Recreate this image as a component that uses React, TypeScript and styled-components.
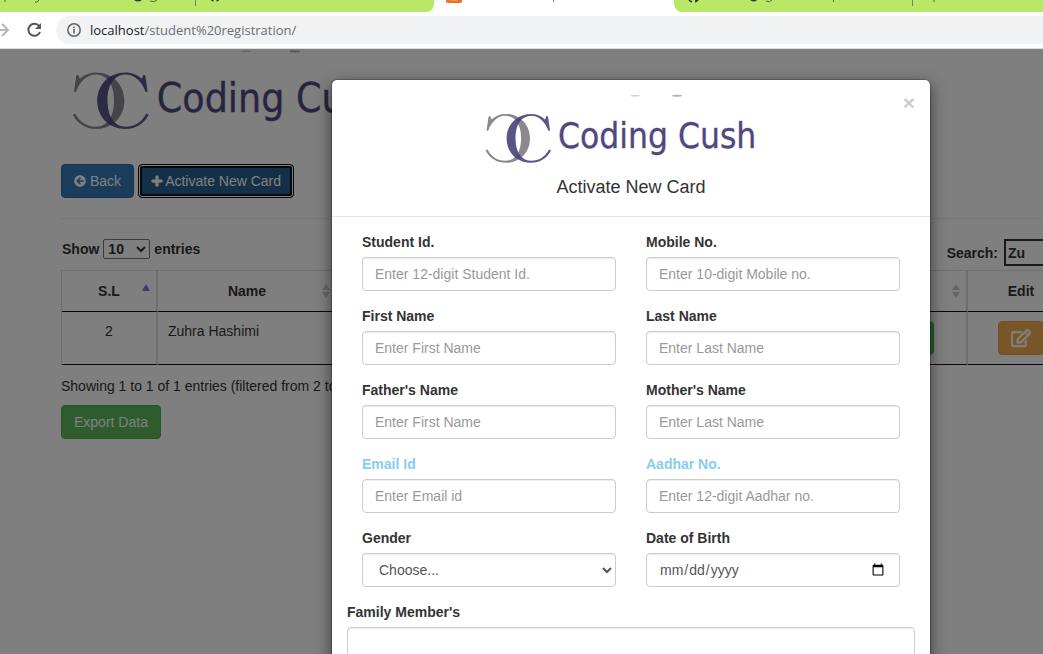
import React from 'react';
import styled, { createGlobalStyle, css } from 'styled-components';
import { FaArrowCircleLeft, FaPlus, FaRegEdit, FaGithub } from 'react-icons/fa';

const GlobalStyle = createGlobalStyle`
  *, *::before, *::after { box-sizing: border-box; }
  body {
    margin: 0;
    background: #fff;
    color: #333;
    font: 14px/20px "Liberation Sans", Arial, sans-serif;
  }
  button, input, select, textarea { font-family: inherit; }
`;

/* ---------- browser window ---------- */

const Shell = styled.div`
  display: flex;
  flex-direction: column;
  height: 100vh;
  overflow: hidden;
`;

const TabStrip = styled.div`
  display: flex;
  height: 12px;
  flex: none;
  overflow: hidden;
`;

const TabGroup = styled.div<{ $width?: number; $active?: boolean; $round?: 'left' | 'right' }>`
  flex: ${p => (p.$width ? `0 0 ${p.$width}px` : '1 1 0')};
  min-width: 0;
  overflow: hidden;
  background: ${p => (p.$active ? '#fff' : '#b8e868')};
  ${p => p.$round === 'right' && css`border-bottom-right-radius: 8px;`}
  ${p => p.$round === 'left' && css`border-bottom-left-radius: 8px;`}
  svg { display: block; }
`;

const AddressBar = styled.div`
  display: flex;
  align-items: center;
  flex: none;
  height: 37px;
  border-bottom: 1px solid #dcdddf;
  background: #fff;
`;

const NavButton = styled.button<{ $width: number }>`
  display: block;
  width: ${p => p.$width}px;
  height: 28px;
  padding: 0;
  border: 0;
  background: none;
  text-align: left;
  svg { display: block; }
`;

const Omnibox = styled.div`
  display: flex;
  align-items: center;
  gap: 8px;
  flex: 1;
  height: 28px;
  padding-left: 10px;
  border-radius: 14px 0 0 14px;
  background: #f0f2f4;
`;

const Url = styled.span`
  font: 13px/20px "Open Sans", "Noto Sans", sans-serif;
  color: #6a6e73;
  white-space: nowrap;
  b { font-weight: 400; color: #202124; }
`;

const Viewport = styled.main`
  position: relative;
  flex: 1;
  min-height: 0;
  overflow: hidden;
`;

/* ---------- page ---------- */

const Page = styled.div`
  min-width: 1262px;
`;

const Container = styled.div`
  max-width: 1170px;
  margin: 0 auto;
  padding: 0 15px;
`;

const PageLogo = styled.div`
  height: 84px;
  margin-bottom: 31px;
  padding-left: 10px;
  svg { display: block; }
`;

const Toolbar = styled.div`
  display: flex;
  gap: 4px;
`;

const tones = {
  primary: ['#337ab7', '#2e6da4'],
  success: ['#5cb85c', '#4cae4c'],
  warning: ['#f0ad4e', '#eea236'],
};

const Button = styled.button<{ $tone: keyof typeof tones; $focused?: boolean }>`
  display: inline-flex;
  align-items: center;
  gap: 4px;
  height: 34px;
  padding: 0 12px;
  border: 1px solid ${p => tones[p.$tone][1]};
  border-radius: 4px;
  background: ${p => tones[p.$tone][0]};
  color: #fff;
  font-size: 14px;
  line-height: 20px;
  white-space: nowrap;
  ${p => p.$focused && css`
    gap: 2px;
    border-color: #101010;
    background: #286090;
    box-shadow: inset 0 0 0 1px #fff, inset 0 0 0 3px #101010;
  `}
`;

const Rule = styled.hr`
  height: 1px;
  margin: 20px 0;
  border: 0;
  background: #eee;
`;

const Controls = styled.div`
  display: flex;
  justify-content: space-between;
  align-items: flex-start;
  height: 31px;
`;

const ControlLabel = styled.label`
  display: flex;
  align-items: center;
  gap: 4px;
  padding-left: 1px;
  font-weight: 700;
`;

const LengthSelect = styled.select`
  width: 47px;
  height: 20px;
  padding: 0;
  border: 1px solid #767676;
  border-radius: 2px;
  background: #fff;
  color: #333;
  font-size: 14px;
  font-weight: 700;
`;

const SearchInput = styled.input`
  width: 197px;
  height: 27px;
  margin-left: 2px;
  padding: 0 2px;
  border: 2px solid #333;
  background: #fff;
  color: #333;
  font-size: 14px;
  font-weight: 700;
`;

const Table = styled.table`
  width: 100%;
  table-layout: fixed;
  border-collapse: separate;
  border-spacing: 0;
  border-top: 1px solid #ddd;
  border-left: 1px solid #ddd;
`;

const Th = styled.th<{ $width?: number }>`
  width: ${p => (p.$width ? `${p.$width}px` : 'auto')};
  height: 41px;
  padding: 0 11px 0 10px;
  border-right: 2px solid #ddd;
  border-bottom: 1px solid #111;
  font-weight: 700;
  text-align: center;
`;

const HeadCell = styled.span`
  display: grid;
  grid-template-columns: 4px 1fr 8px;
  align-items: center;
  margin-right: -5px;
`;

const HeadText = styled.span`
  grid-column: 2;
`;

const Td = styled.td<{ $center?: boolean }>`
  height: 53px;
  padding: 9px 10px;
  border-right: 2px solid #ddd;
  border-bottom: 1px solid #111;
  text-align: ${p => (p.$center ? 'center' : 'left')};
  vertical-align: top;
`;

const Footer = styled.div`
  display: flex;
  justify-content: space-between;
  margin: 11px 0 9px;
`;

const Pager = styled.nav`
  display: flex;
  gap: 24px;
  padding-right: 20px;
  a { color: #666; text-decoration: none; }
`;

/* ---------- dialog ---------- */

const Backdrop = styled.div`
  position: absolute;
  top: 0;
  left: 0;
  width: 100%;
  min-width: 1262px;
  min-height: 100%;
  padding: 30px 0;
  background: rgba(0, 0, 0, 0.5);
`;

const Dialog = styled.section`
  width: 600px;
  margin: 0 auto;
  border: 1px solid rgba(0, 0, 0, 0.2);
  border-radius: 6px;
  background: #fff;
  background-clip: padding-box;
  box-shadow: 0 5px 15px rgba(0, 0, 0, 0.5);
`;

const DialogHeader = styled.header`
  position: relative;
  padding: 14px 15px 19px;
  border-bottom: 1px solid #e5e5e5;
  text-align: center;
  svg { display: block; margin: 0 auto; }
`;

const DialogTitle = styled.h4`
  margin: 11px 0 0;
  font-size: 18px;
  font-weight: 400;
  line-height: 20px;
`;

const CloseButton = styled.button`
  position: absolute;
  top: 12px;
  right: 15px;
  padding: 0;
  border: 0;
  background: none;
  color: #000;
  font-size: 21px;
  font-weight: 700;
  line-height: 21px;
  opacity: 0.2;
`;

const DialogBody = styled.form`
  padding: 15px;
`;

const Fields = styled.div`
  display: grid;
  grid-template-columns: 1fr 1fr;
  column-gap: 30px;
  padding: 0 15px;
`;

const Field = styled.div`
  margin-bottom: 15px;
`;

const Label = styled.label<{ $sky?: boolean }>`
  display: block;
  margin-bottom: 5px;
  font-weight: 700;
  color: ${p => (p.$sky ? '#87ceeb' : '#333')};
`;

const control = css`
  display: block;
  width: 100%;
  height: 34px;
  padding: 6px 12px;
  border: 1px solid #ccc;
  border-radius: 4px;
  background: #fff;
  box-shadow: inset 0 1px 1px rgba(0, 0, 0, 0.075);
  color: #555;
  font-size: 14px;
  line-height: 20px;
  &::placeholder { color: #999; opacity: 1; }
`;

const Input = styled.input`${control}`;
const Select = styled.select`${control}`;
const TextArea = styled.textarea`
  ${control}
  height: 74px;
  resize: none;
`;

/* ---------- drawings ---------- */

const MONOGRAM =
  'M67 56.5C62.5 65 55 68.800 47 68.800C33 68.800 22.600 58.500 22.600 44.500C22.600 30.500 33 20 47 20C52.500 20 57.500 22 61 25.500L62.500 22L64 22.500L66 36.500L64.500 37C61 27.500 54.500 21.800 47.500 21.800C37 21.800 31.500 31 31.500 44C31.500 58 37 66.800 47.500 66.800C55 66.800 61 63 65 55.500Z';

function Logo({ width, height }: { width: number; height: number }) {
  return (
    <svg width={width} height={height} viewBox="0 0 294 72" role="img" aria-label="Coding Cush">
      <path d={MONOGRAM} fill="#8b8890" transform="translate(68.600 0) scale(-1 1)" />
      <path d={MONOGRAM} fill="#48427c" fillOpacity="0.9" />
      <ellipse cx="151" cy="1.800" rx="5" ry="0.800" fill="#cfcfd3" />
      <ellipse cx="193" cy="1.800" rx="5" ry="1" fill="#b4b4b8" />
      <text
        x="74"
        y="54"
        fontSize="35"
        fontFamily="'DejaVu Sans Condensed', 'DejaVu Sans', sans-serif"
        fill="#4f4880"
        stroke="#4f4880"
        strokeOpacity="0.4"
        strokeWidth="0.8"
      >
        Coding Cush
      </text>
    </svg>
  );
}

function SortIcon({ sorted }: { sorted?: boolean }) {
  return sorted ? (
    <svg width="8" height="14" viewBox="0 0 8 14"><path d="M4 0L8 7H0Z" fill="#7b75d6" /></svg>
  ) : (
    <svg width="8" height="14" viewBox="0 0 8 14"><path d="M4 0L8 6H0ZM0 8H8L4 14Z" fill="#ccc" /></svg>
  );
}

function LeftTabs() {
  return (
    <svg width="434" height="12">
      <path d="M5 0V2M39 0L37 2H35M150 1Q154 3 157 0" stroke="#55703a" fill="none" />
      <path d="M134 0Q138 3 142 0Z" fill="#2f4318" />
      <path d="M195.500 0V6" stroke="#71894a" />
      <FaGithub x="209" y="-10" size="12" color="#25301a" />
    </svg>
  );
}

function ActiveTab() {
  return (
    <svg width="240" height="12">
      <rect x="12" y="-12" width="16" height="15" rx="2" fill="#e8702a" />
      <path d="M16 0H24" stroke="#f9b27c" />
      <path d="M119.500 0V2" stroke="#777" />
    </svg>
  );
}

function RightTabs() {
  return (
    <svg width="369" height="12">
      <FaGithub x="13" y="-10" size="13" color="#25301a" />
      <path d="M76 0Q80 3 83 0Z" fill="#2f4318" />
      <path d="M92 1Q96 3 98 0M159.500 0V2M261 1H259" stroke="#55703a" fill="none" />
      <path d="M238.500 0V6" stroke="#71894a" />
    </svg>
  );
}

/* ---------- content ---------- */

const textFields = [
  { id: 'student', label: 'Student Id.', hint: 'Enter 12-digit Student Id.' },
  { id: 'mobile', label: 'Mobile No.', hint: 'Enter 10-digit Mobile no.' },
  { id: 'first', label: 'First Name', hint: 'Enter First Name' },
  { id: 'last', label: 'Last Name', hint: 'Enter Last Name' },
  { id: 'father', label: "Father's Name", hint: 'Enter First Name' },
  { id: 'mother', label: "Mother's Name", hint: 'Enter Last Name' },
  { id: 'email', label: 'Email Id', hint: 'Enter Email id', sky: true },
  { id: 'aadhar', label: 'Aadhar No.', hint: 'Enter 12-digit Aadhar no.', sky: true },
];

const columns = [
  { label: 'S.L', width: 96, sorted: true },
  { label: 'Name', width: 180 },
  { label: '', width: 260 },
  { label: '', width: 260 },
  { label: '', width: 110 },
  { label: 'Edit', width: 108 },
  { label: '' },
];

export default function App() {
  return (
    <>
      <GlobalStyle />
      <Shell>
        <TabStrip>
          <TabGroup $width={434} $round="right"><LeftTabs /></TabGroup>
          <TabGroup $width={240} $active><ActiveTab /></TabGroup>
          <TabGroup $round="left"><RightTabs /></TabGroup>
        </TabStrip>
        <AddressBar>
          <NavButton $width={26} aria-label="Forward">
            <svg width="10" height="28" viewBox="0 0 10 28" fill="none" stroke="#b4b6b9" strokeWidth="2">
              <path d="M0 14H8M2 8L8 14L2 20" />
            </svg>
          </NavButton>
          <NavButton $width={30} aria-label="Reload">
            <svg width="16" height="28" viewBox="0 0 16 28" fill="none" stroke="#55585c" strokeWidth="2">
              <path d="M13.200 10.200A6 6 0 1 0 14 16" />
              <path d="M15 7V13H9Z" fill="#55585c" stroke="none" />
            </svg>
          </NavButton>
          <Omnibox>
            <svg width="16" height="16" viewBox="0 0 16 16" fill="none" stroke="#5f6368">
              <circle cx="8" cy="8" r="6.200" strokeWidth="1.500" />
              <path d="M8 7V11.500M8 4.500V6" strokeWidth="1.600" />
            </svg>
            <Url><b>localhost</b>/student%20registration/</Url>
          </Omnibox>
        </AddressBar>

        <Viewport>
          <Page>
            <Container>
              <PageLogo><Logo width={341} height={84} /></PageLogo>
              <Toolbar>
                <Button $tone="primary"><FaArrowCircleLeft size={12} />Back</Button>
                <Button $tone="primary" $focused>
                  <FaPlus size={12} stroke="currentColor" strokeWidth={40} />Activate New Card
                </Button>
              </Toolbar>
              <Rule />
              <Controls>
                <ControlLabel>
                  Show
                  <LengthSelect defaultValue="10"><option>10</option></LengthSelect>
                  entries
                </ControlLabel>
                <ControlLabel>Search:<SearchInput type="search" defaultValue="Zu" /></ControlLabel>
              </Controls>
              <Table>
                <thead>
                  <tr>
                    {columns.map((c, i) => (
                      <Th key={i} $width={c.width}>
                        <HeadCell>
                          <HeadText>{c.label}</HeadText>
                          {c.label !== 'Edit' && <SortIcon sorted={c.sorted} />}
                        </HeadCell>
                      </Th>
                    ))}
                  </tr>
                </thead>
                <tbody>
                  <tr>
                    <Td $center>2</Td>
                    <Td>Zuhra Hashimi</Td>
                    <Td />
                    <Td />
                    <Td $center><Button $tone="success" aria-label="View"><FaPlus size={18} /></Button></Td>
                    <Td $center>
                      <Button $tone="warning" aria-label="Edit">
                        <FaRegEdit size={20} stroke="currentColor" strokeWidth={16} />
                      </Button>
                    </Td>
                    <Td />
                  </tr>
                </tbody>
              </Table>
              <Footer>
                <span>Showing 1 to 1 of 1 entries (filtered from 2 total entries)</span>
                <Pager>
                  <a href="#previous">Previous</a>
                  <a href="#1">1</a>
                  <a href="#next">Next</a>
                </Pager>
              </Footer>
              <Button $tone="success">Export Data</Button>
            </Container>
          </Page>

          <Backdrop>
            <Dialog role="dialog" aria-labelledby="dialog-title">
              <DialogHeader>
                <Logo width={294} height={72} />
                <DialogTitle id="dialog-title">Activate New Card</DialogTitle>
                <CloseButton aria-label="Close">×</CloseButton>
              </DialogHeader>
              <DialogBody>
                <Fields>
                  {textFields.map(f => (
                    <Field key={f.id}>
                      <Label htmlFor={f.id} $sky={f.sky}>{f.label}</Label>
                      <Input id={f.id} type="text" placeholder={f.hint} />
                    </Field>
                  ))}
                  <Field>
                    <Label htmlFor="gender">Gender</Label>
                    <Select id="gender"><option>Choose...</option></Select>
                  </Field>
                  <Field>
                    <Label htmlFor="birth">Date of Birth</Label>
                    <Input id="birth" type="date" />
                  </Field>
                </Fields>
                <Field>
                  <Label htmlFor="family">Family Member's</Label>
                  <TextArea id="family" />
                </Field>
              </DialogBody>
            </Dialog>
          </Backdrop>
        </Viewport>
      </Shell>
    </>
  );
}
